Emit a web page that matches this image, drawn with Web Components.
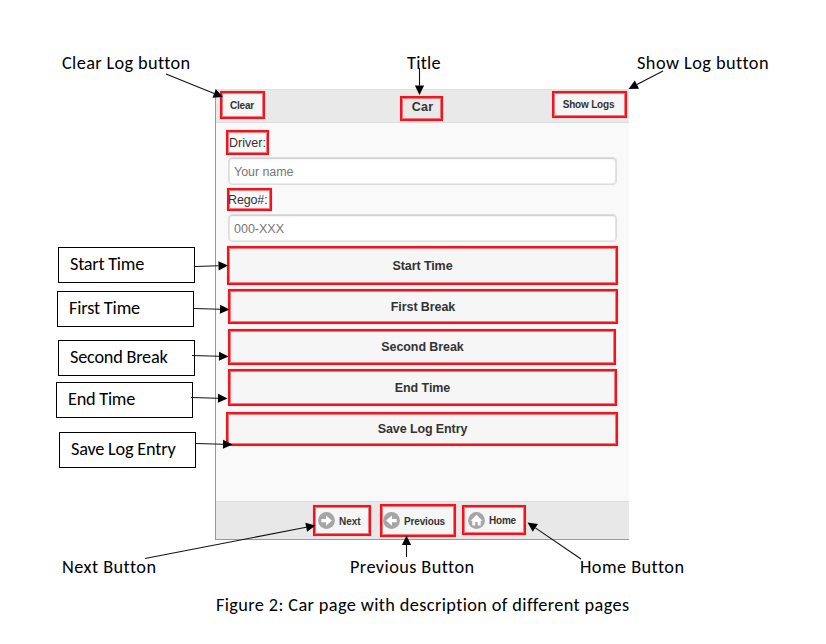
<!DOCTYPE html>
<html lang="en">
<head>
<meta charset="utf-8">
<title>Car page</title>
<style>
html,body{margin:0;background:#fff}
</style>
</head>
<body>
<figure-page></figure-page>
<script>
/* Text set to an exact width by spreading its letters. */
class FitText extends HTMLElement{
  connectedCallback(){
    const r=this.attachShadow({mode:'open'});
    r.innerHTML='<style>:host{display:inline-block;white-space:nowrap}span{display:inline-block;white-space:nowrap}</style><span></span>';
    const s=r.querySelector('span');
    s.textContent=this.getAttribute('text');
    const want=parseFloat(this.getAttribute('width'));
    const n=s.textContent.length;
    if(want){
      const gap=(want-s.getBoundingClientRect().width)/n;
      s.style.letterSpacing=gap.toFixed(3)+'px';
    }
  }
}

/* Red frame round a control. */
class MarkedBox extends HTMLElement{
  connectedCallback(){
    this.attachShadow({mode:'open'}).innerHTML=`<style>
      :host{display:flex;box-sizing:border-box;align-items:center;justify-content:center;border:2px solid #f0141e;background:#f6f6f6;flex:none;box-shadow:inset 0 0 0 1px rgba(240,20,30,.55),0 0 1px rgba(240,20,30,.4)}
    </style><slot></slot>`;
  }
}

class TextField extends HTMLElement{
  connectedCallback(){
    this.attachShadow({mode:'open'}).innerHTML=`<style>
      :host{display:flex;box-sizing:border-box;align-items:center;width:389px;height:28px;margin-left:12px;padding:1px 0 0 5px;border:1px solid #ddd;border-radius:4px;background:#fff;color:#777;box-shadow:inset 0 1px 2px rgba(0,0,0,.16),inset 0 0 0 1px #eee}
    </style><slot></slot>`;
  }
}

class RoundIcon extends HTMLElement{
  connectedCallback(){
    const glyphs={
      next:'<path d="M3.3 6.9H8V3.4l5.9 5.2L8 13.8v-3.5H3.3z" fill="#fff"/>',
      previous:'<path d="M13.7 6.9H9V3.4L3.1 8.6 9 13.8v-3.5h4.7z" fill="#fff"/>',
      home:'<path d="M8.5 2.8L2.5 8.7h1.8v4.9h3v-3.6h2.4v3.6h3V8.7h1.8z" fill="#fff"/>'
    };
    this.attachShadow({mode:'open'}).innerHTML=`<style>:host{display:block;width:17px;height:17px;flex:none}svg{display:block}</style>
      <svg width="17" height="17" viewBox="0 0 17 17"><circle cx="8.5" cy="8.5" r="8.4" fill="#a6a6a6"/>${glyphs[this.getAttribute('name')]}</svg>`;
  }
}

class CarApp extends HTMLElement{
  connectedCallback(){
    this.attachShadow({mode:'open'}).innerHTML=`<style>
      :host{display:flex;flex-direction:column;box-sizing:border-box;width:414px;height:451px;border-left:1px solid #6fa5d6;border-bottom:1px solid #6fa5d6;background:#f9f9f9;font-family:"Liberation Sans",Arial,sans-serif;font-size:12.5px;color:#333}
      header{display:flex;align-items:flex-start;box-sizing:border-box;height:34px;background:#e9e9e9;border-top:1px solid #e0e0e0;border-bottom:1px solid #ddd;font-weight:bold;font-size:10px}
      main{flex:1;display:flex;flex-direction:column;align-items:flex-start}
      main>marked-box{font-weight:bold}
      main>.label{background:#f9f9f9;font-weight:normal;padding-top:1px}
      footer{display:flex;align-items:flex-start;box-sizing:border-box;height:38px;background:#e8e8e8;border-top:1px solid #ddd;font-weight:bold;font-size:10px}
      footer marked-box{justify-content:flex-start}
      footer fit-text{margin-left:4px;padding-top:1px}
    </style>
    <header>
      <marked-box style="width:45px;height:28px;margin:1px 0 0 4px;padding-right:1px"><fit-text text="Clear" width="24"></fit-text></marked-box>
      <marked-box style="width:43px;height:25px;margin:6px 0 0 135px;background:#e9e9e9;font-size:12.5px;padding-bottom:4px;padding-left:2px"><fit-text text="Car" width="21.5"></fit-text></marked-box>
      <marked-box style="width:75px;height:27px;margin:1px 0 0 109px;padding-right:2px"><fit-text text="Show Logs" width="51.5"></fit-text></marked-box>
    </header>
    <main>
      <marked-box class="label" style="width:43px;height:25px;margin:7px 0 2px 10px"><fit-text text="Driver:" width="37"></fit-text></marked-box>
      <text-field><fit-text text="Your name" width="59.5"></fit-text></text-field>
      <marked-box class="label" style="width:45px;height:23px;margin:3px 0 3px 11px;justify-content:flex-start"><fit-text text="Rego#:" width="39.5" style="margin-left:-1px"></fit-text></marked-box>
      <text-field><fit-text text="000-XXX" width="50"></fit-text></text-field>
      <marked-box style="width:391px;height:39px;margin:4px 0 0 11px"><fit-text text="Start Time" width="60"></fit-text></marked-box>
      <marked-box style="width:390px;height:35px;margin:4px 0 0 12px"><fit-text text="First Break" width="64.5"></fit-text></marked-box>
      <marked-box style="width:388px;height:36px;margin:5px 0 0 12px;padding-left:1px"><fit-text text="Second Break" width="82.5"></fit-text></marked-box>
      <marked-box style="width:389px;height:37px;margin:4px 0 0 12px"><fit-text text="End Time" width="55.5"></fit-text></marked-box>
      <marked-box style="width:392px;height:34px;margin:6px 0 0 10px;padding-left:1px"><fit-text text="Save Log Entry" width="89.5"></fit-text></marked-box>
    </main>
    <footer>
      <marked-box style="width:58px;height:31px;margin:3px 0 0 97px;padding-left:3px"><round-icon name="next"></round-icon><fit-text text="Next" width="21.5"></fit-text></marked-box>
      <marked-box style="width:76px;height:33px;margin:2px 0 0 9px;padding-left:1px"><round-icon name="previous"></round-icon><fit-text text="Previous" width="41"></fit-text></marked-box>
      <marked-box style="width:64px;height:30px;margin:3px 0 0 6px;padding-left:4px"><round-icon name="home"></round-icon><fit-text text="Home" width="27"></fit-text></marked-box>
    </footer>`;
  }
}

/* Canvas of captions, callout boxes and arrows round the app. */
class FigurePage extends HTMLElement{
  connectedCallback(){
    const captions=[
      ['Clear Log button',62,53,128.5],['Title',407,53,34],['Show Log button',637,53,132],
      ['Next Button',62,557,94.5],['Previous Button',350,557,124.5],['Home Button',580,557,104.5],
      ['Figure 2: Car page with description of different pages',216,595,413.5]];
    const boxes=[['Start Time',58,247,74],['First Time',57,291,71],['Second Break',58,340,97.5],['End Time',56,382,67],['Save Log Entry',59,432,104.5]];
    const arrows=[
      [166,74,223,97],[419.5,68,419.5,95],[663,71,628.5,89],
      [195,266.5,228,265.5],[194,308.5,229.5,309.5],[192,355.5,228.5,356.5],[191,397.5,227.5,398.5],[196,443.5,232.5,444.5],
      [145,558.5,315.5,525.5],[406.5,557,406.5,535.5],[581,559,527.5,522.5]];
    const draw=([a,b,c,d])=>{
      const l=Math.hypot(c-a,d-b),u=(c-a)/l,v=(d-b)/l,x=c-u*9.5,y=d-v*9.5;
      return `<path d="M${a} ${b}L${x} ${y}" stroke="#111" stroke-width="1.1"/><path d="M${c} ${d}L${x-v*4.6} ${y+u*4.6}L${x+v*4.6} ${y-u*4.6}z"/>`;
    };
    this.attachShadow({mode:'open'}).innerHTML=`<style>
      :host{display:block;position:relative;width:826px;height:644px;overflow:hidden;background:#fff;color:#000;font:18.3px/20px Carlito,Lato,sans-serif;font-variant-ligatures:none}
      car-app{position:absolute;left:215px;top:89px;line-height:normal}
      .caption,.callout{position:absolute}
      .callout{box-sizing:border-box;width:137px;height:36px;border:1px solid #000;background:#fff;padding:6px 0 0 11px}
      svg{position:absolute;left:0;top:0}
    </style>
    <car-app></car-app>
    ${captions.map(([t,x,y,w])=>`<fit-text class="caption" style="left:${x}px;top:${y}px" text="${t}" width="${w}"></fit-text>`).join('')}
    ${boxes.map(([t,x,y,w])=>`<div class="callout" style="left:${x}px;top:${y}px"><fit-text text="${t}" width="${w}"></fit-text></div>`).join('')}
    <svg width="826" height="644" viewBox="0 0 826 644">${arrows.map(draw).join('')}</svg>`;
  }
}
customElements.define('fit-text',FitText);
customElements.define('marked-box',MarkedBox);
customElements.define('text-field',TextField);
customElements.define('round-icon',RoundIcon);
customElements.define('car-app',CarApp);
customElements.define('figure-page',FigurePage);
</script>
</body>
</html>
